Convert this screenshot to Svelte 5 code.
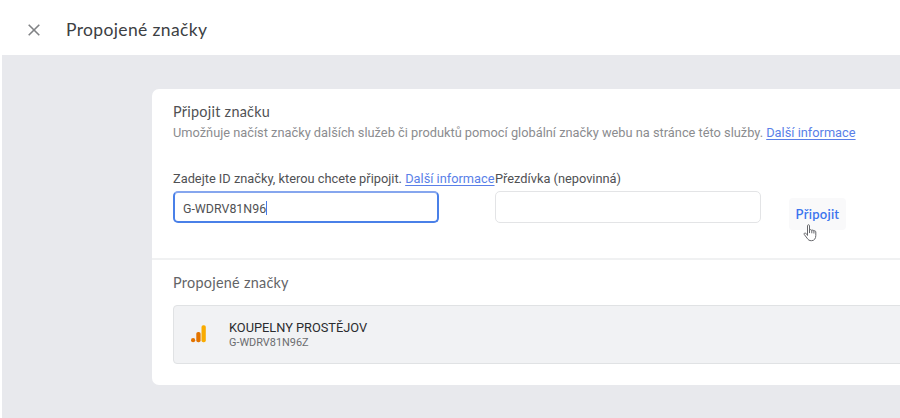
<script lang="ts">
	let tagId = $state('G-WDRV81N96');
	let nickname = $state('');

	const linkedTags = [{ name: 'KOUPELNY PROSTĚJOV', id: 'G-WDRV81N96Z' }];
</script>

<div class="page">
	<header class="topbar">
		<button class="close" aria-label="Zavřít">
			<svg width="12" height="12" viewBox="0 0 12 12" fill="none" stroke="currentColor" stroke-width="1.6">
				<path d="M0.7 0.7L11.3 11.3M11.3 0.7L0.7 11.3" />
			</svg>
		</button>
		<h1>Propojené značky</h1>
	</header>

	<main>
		<div class="card">
			<section class="connect">
				<h2>Připojit značku</h2>
				<p class="description">
					Umožňuje načíst značky dalších služeb či produktů pomocí globální značky webu na stránce této služby.
					<a href="#info">Další informace</a>
				</p>

				<div class="form">
					<div class="field">
						<div class="label">
							<label for="tag-id">Zadejte ID značky, kterou chcete připojit.</label>
							<a href="#info">Další informace</a>
						</div>
						<!-- the focused field shows its text caret -->
						<div class="input focused" id="tag-id" role="textbox" tabindex="0">{tagId}<span class="caret"></span></div>
					</div>
					<div class="field">
						<div class="label"><label for="nickname">Přezdívka (nepovinná)</label></div>
						<input class="input" id="nickname" bind:value={nickname} />
					</div>
					<button class="submit">
						<span>Připojit</span>
						<svg class="pointer" width="15" height="18" viewBox="0 0 15 18" fill="#fff" stroke="#66676b" stroke-width="1" stroke-linejoin="round" stroke-linecap="round">
							<path d="M4.5 11V1.7C4.5 0.4 6.5 0.4 6.5 1.7V6.4C6.8 5.3 8.6 5.4 8.8 6.6C9.2 5.8 10.7 6 10.9 7C11.6 6.4 12.8 6.9 12.8 8V11.5C12.8 14.5 11.3 16.7 8.5 16.7C6.3 16.7 5.2 15.9 4.1 14.2L1.2 10.4C0.6 9.5 1.8 8.6 2.7 9.3L4.5 11Z" />
							<path d="M6.5 6.5V8.7M8.8 6.8V8.9M10.9 7.2V9.1" />
						</svg>
					</button>
				</div>
			</section>

			<section class="linked">
				<h2>Propojené značky</h2>
				{#each linkedTags as tag}
					<div class="tag">
						<svg width="16" height="18" viewBox="0 0 16 18">
							<rect x="10.5" y="0.3" width="4.3" height="17" rx="1.8" fill="#f9ab00" />
							<rect x="5.3" y="7" width="4.3" height="10.3" rx="1.8" fill="#e37400" />
							<circle cx="2.1" cy="15.2" r="2.1" fill="#e37400" />
						</svg>
						<div>
							<div class="tag-name">{tag.name}</div>
							<div class="tag-id">{tag.id}</div>
						</div>
					</div>
				{/each}
			</section>
		</div>
	</main>
</div>

<style>
	:global(body) {
		margin: 0;
		overflow: hidden;
	}

	.page {
		box-sizing: border-box;
		height: 418px;
		display: flex;
		flex-direction: column;
		padding-left: 2px;
		overflow: hidden;
		background: #fff;
		color: #505154;
		font-family: Roboto, sans-serif;
		font-size: 12.81px;
	}

	h1,
	h2,
	p {
		margin: 0;
		font-weight: 400;
	}

	button {
		border: 0;
		background: none;
		padding: 0;
	}

	a {
		color: #5a7fe8;
		text-decoration: underline;
		text-underline-offset: 2px;
	}

	/* Top bar */
	.topbar {
		box-sizing: border-box;
		height: 55px;
		display: flex;
		align-items: center;
		gap: 26px;
		padding: 4px 0 0 26px;
	}

	.close {
		display: flex;
		color: #808285;
	}

	h1 {
		color: #3c4043;
		font-family: Lato, sans-serif;
		font-size: 17.5px;
		line-height: 22px;
		letter-spacing: 0.36px;
	}

	main {
		flex: 1;
		padding: 34px 0 0 150px;
		background: #e8e9ed;
	}

	/* Card runs past the right edge of the window */
	.card {
		box-sizing: border-box;
		width: 780px;
		height: 296px;
		border-radius: 7px;
		background: #fff;
	}

	.connect {
		box-sizing: border-box;
		height: 171px;
		padding: 14px 21px 0;
		border-bottom: 2px solid #f0f1f2;
	}

	h2 {
		font-family: Lato, sans-serif;
		font-size: 14.4px;
		line-height: 18px;
		letter-spacing: 0.27px;
	}

	.description {
		margin-top: 3px;
		line-height: 18px;
		color: #8b8c8f;
		white-space: nowrap;
	}

	/* Form */
	.form {
		display: flex;
		align-items: flex-end;
		margin-top: 28px;
	}

	.field {
		width: 266px;
		margin-right: 56px;
	}

	.field + .field {
		margin-right: 28px;
	}

	.label {
		margin-bottom: 3px;
		line-height: 18px;
		white-space: nowrap;
	}

	.input {
		box-sizing: border-box;
		display: flex;
		align-items: center;
		width: 266px;
		height: 32px;
		padding: 0 9px;
		border: 1px solid #e3e4e6;
		border-radius: 5px;
		background: #fff;
		font: inherit;
		font-size: 12.4px;
	}

	.input.focused {
		padding: 2px 8px 0;
		border: 2px solid #4a80e8;
		border-top-color: #86a6ee;
	}

	.caret {
		width: 1px;
		height: 14px;
		background: #4a7be6;
	}

	.submit {
		position: relative;
		top: 7px;
		width: 57px;
		height: 32px;
		border-radius: 4px;
		background: #f9f9fa;
		color: #3b74ee;
		font-family: Lato, sans-serif;
		font-size: 13px;
		font-weight: 600;
		letter-spacing: 0.25px;
	}

	.pointer {
		position: absolute;
		left: 14px;
		top: 26px;
	}

	/* Linked tags */
	.linked {
		padding: 14px 21px 0;
	}

	.linked h2 {
		color: #636467;
	}

	.tag {
		box-sizing: border-box;
		height: 59px;
		display: flex;
		align-items: center;
		gap: 22px;
		margin-top: 13px;
		padding-left: 17px;
		border: 1px solid #e0e2e4;
		border-radius: 4px;
		background: #f1f2f4;
	}

	.tag svg {
		margin-top: -2px;
	}

	.tag-name {
		color: #2b2c2f;
		font-size: 12.8px;
		line-height: 16px;
	}

	.tag-id {
		color: #6b6c6f;
		font-size: 10.9px;
		line-height: 14px;
	}
</style>
